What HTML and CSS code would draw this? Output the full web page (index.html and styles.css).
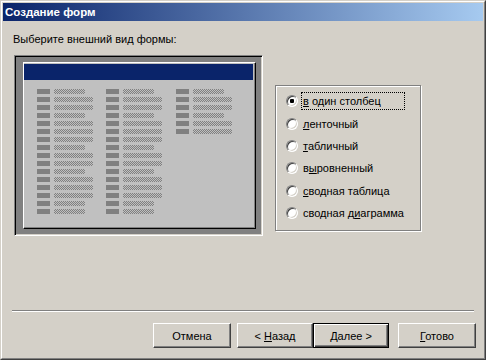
FILE: index.html
```html
<!DOCTYPE html>
<html lang="ru">
<head>
<meta charset="utf-8">
<link rel="stylesheet" href="styles.css">
</head>
<body>
<div class="window">
  <div class="window-inner">
    <div class="titlebar"><span class="title">Создание форм</span></div>
    <div class="content">
      <div class="prompt">Выберите внешний вид формы:</div>
      <div class="main">
        <div class="preview">
          <div class="panel">
            <div class="panel-head"></div>
            <div class="cols">
              <div class="col">
                <div class="row"><i class="lbl"></i><i class="fld s"></i></div>
                <div class="row"><i class="lbl"></i><i class="fld l"></i></div>
                <div class="row"><i class="lbl"></i><i class="fld l"></i></div>
                <div class="row"><i class="lbl"></i><i class="fld s"></i></div>
                <div class="row"><i class="lbl"></i><i class="fld l"></i></div>
                <div class="row"><i class="lbl"></i><i class="fld l"></i></div>
                <div class="row"><i class="lbl"></i><i class="fld l"></i></div>
                <div class="row"><i class="lbl"></i><i class="fld s"></i></div>
                <div class="row"><i class="lbl"></i><i class="fld l"></i></div>
                <div class="row"><i class="lbl"></i><i class="fld l"></i></div>
                <div class="row"><i class="lbl"></i><i class="fld s"></i></div>
                <div class="row"><i class="lbl"></i><i class="fld l"></i></div>
                <div class="row"><i class="lbl"></i><i class="fld l"></i></div>
                <div class="row"><i class="lbl"></i><i class="fld l"></i></div>
                <div class="row"><i class="lbl"></i><i class="fld s"></i></div>
                <div class="row"><i class="lbl"></i><i class="fld s"></i></div>
              </div>
              <div class="col">
                <div class="row"><i class="lbl"></i><i class="fld s"></i></div>
                <div class="row"><i class="lbl"></i><i class="fld l"></i></div>
                <div class="row"><i class="lbl"></i><i class="fld l"></i></div>
                <div class="row"><i class="lbl"></i><i class="fld s"></i></div>
                <div class="row"><i class="lbl"></i><i class="fld l"></i></div>
                <div class="row"><i class="lbl"></i><i class="fld l"></i></div>
                <div class="row"><i class="lbl"></i><i class="fld l"></i></div>
                <div class="row"><i class="lbl"></i><i class="fld s"></i></div>
                <div class="row"><i class="lbl"></i><i class="fld l"></i></div>
                <div class="row"><i class="lbl"></i><i class="fld l"></i></div>
                <div class="row"><i class="lbl"></i><i class="fld s"></i></div>
                <div class="row"><i class="lbl"></i><i class="fld l"></i></div>
                <div class="row"><i class="lbl"></i><i class="fld l"></i></div>
                <div class="row"><i class="lbl"></i><i class="fld l"></i></div>
                <div class="row"><i class="lbl"></i><i class="fld s"></i></div>
                <div class="row"><i class="lbl"></i><i class="fld s"></i></div>
              </div>
              <div class="col">
                <div class="row"><i class="lbl"></i><i class="fld s"></i></div>
                <div class="row"><i class="lbl"></i><i class="fld l"></i></div>
                <div class="row"><i class="lbl"></i><i class="fld l"></i></div>
                <div class="row"><i class="lbl"></i><i class="fld s"></i></div>
                <div class="row"><i class="lbl"></i><i class="fld l"></i></div>
                <div class="row"><i class="lbl"></i><i class="fld l"></i></div>
              </div>
            </div>
          </div>
        </div>
        <div class="group">
          <div class="opt"><span class="radio checked"></span><span class="otext focus"><u>в</u> один столбец</span></div>
          <div class="opt"><span class="radio"></span><span class="otext"><u>л</u>енточный</span></div>
          <div class="opt"><span class="radio"></span><span class="otext"><u>т</u>абличный</span></div>
          <div class="opt"><span class="radio"></span><span class="otext">в<u>ы</u>ровненный</span></div>
          <div class="opt"><span class="radio"></span><span class="otext"><u>с</u>водная таблица</span></div>
          <div class="opt"><span class="radio"></span><span class="otext">сводная д<u>и</u>аграмма</span></div>
        </div>
      </div>
      <div class="separator"></div>
      <div class="buttons">
        <div class="btn w-cancel"><span>Отмена</span></div>
        <div class="btn w-back"><span>&lt; <u>Н</u>азад</span></div>
        <div class="btn default w-next"><span><u>Д</u>алее &gt;</span></div>
        <div class="btn w-done"><span><u>Г</u>отово</span></div>
      </div>
    </div>
  </div>
</div>
</body>
</html>
```
FILE: styles.css
```css
* { box-sizing: border-box; }
html, body { margin: 0; padding: 0; background: #d4d0c8; }
body { font-family: "Liberation Sans", Arial, sans-serif; font-size: 11px; color: #000; }

.window {
  width: 486px; height: 360px;
  border: 1px solid; border-color: #d4d0c8 #404040 #404040 #d4d0c8;
  background: #d4d0c8;
}
.window-inner {
  height: 100%;
  border: 1px solid; border-color: #fff #808080 #808080 #fff;
  padding: 1px;
  display: flex; flex-direction: column;
}
.titlebar {
  height: 18px;
  background: linear-gradient(to right, #0a246a, #a6caf0);
  display: flex; align-items: center;
  padding-left: 2px;
}
.title { color: #fff; font-weight: bold; font-size: 11.5px; line-height: 14px; }

.content { flex: 1; padding-left: 10px; display: flex; flex-direction: column; }

.prompt { margin-top: 11px; height: 14px; line-height: 14px; }

.main { display: flex; align-items: flex-start; margin-top: 9px; }

.preview {
  margin-left: 1px;
  width: 249px; height: 181px;
  border: 1px solid; border-color: #808080 #fff #fff #808080;
  box-shadow: inset 1px 1px #000, inset -1px -1px #d4d0c8;
  background: #808080;
  padding: 6px 6px 6px 8px;
}
.panel {
  width: 233px; height: 167px;
  background: #c0c0c0;
  border: 1px solid; border-color: #fff #000 #000 #fff;
  box-shadow: inset -1px -1px #808080;
}
.panel-head { margin-top: 1px; width: 229px; height: 16px; background: #0a246a; }
.cols { display: flex; padding-left: 13px; margin-top: 9px; }
.col { width: 69px; display: flex; flex-direction: column; gap: 3px; }
.col + .col + .col { margin-left: 1px; }
.row { display: flex; gap: 4px; height: 5px; }
.lbl { width: 13px; height: 5px; background: #808080; }
.fld { height: 5px;
  background: repeating-conic-gradient(#808080 0 25%, #c0c0c0 0 50%) 0 0 / 2px 2px; }
.fld.s { width: 31px; }
.fld.l { width: 39px; }

.group {
  margin-left: 12px; margin-top: 30px;
  width: 146px; height: 146px;
  border: 1px solid #808080;
  box-shadow: inset 1px 1px #fff, 1px 1px #fff;
  padding: 4px 0 0 10px;
  display: flex; flex-direction: column;
}
.opt { height: 22.4px; display: flex; align-items: center; }
.radio {
  width: 12px; height: 12px; border-radius: 50%;
  background: #fff;
  border: 1px solid; border-color: #808080 #fff #fff #808080;
  box-shadow: inset 1px 1px #404040, inset -1px -1px #d4d0c8;
  display: flex; align-items: center; justify-content: center;
  flex: none;
}
.radio.checked::after { content: ""; width: 4px; height: 4px; border-radius: 1px; background: #000; }
.otext { margin-left: 4px; line-height: 14px; padding: 1px 1px; }
.otext.focus { outline: 1px dotted #000; width: 102px; }
u { text-decoration: underline; text-underline-offset: 1px; }

.separator {
  margin-top: 74px; margin-left: -1px; width: 462px;
  height: 2px; border-top: 1px solid #808080; border-bottom: 1px solid #fff;
}
.buttons { display: flex; margin-top: 11px; padding-left: 140px; }
.btn {
  height: 25px;
  display: flex; align-items: center; justify-content: center;
  border: 1px solid; border-color: #fff #404040 #404040 #fff;
  box-shadow: inset -1px -1px #808080;
  background: #d4d0c8;
}
.btn span { white-space: pre; }
.btn.default { border-color: #000; box-shadow: inset 1px 1px #fff, inset -1px -1px #404040, inset -2px -2px #808080; }
.w-cancel { width: 78px; }
.w-back { width: 76px; margin-left: 6px; }
.w-next { width: 76px; }
.w-done { width: 78px; margin-left: 9px; }
```
